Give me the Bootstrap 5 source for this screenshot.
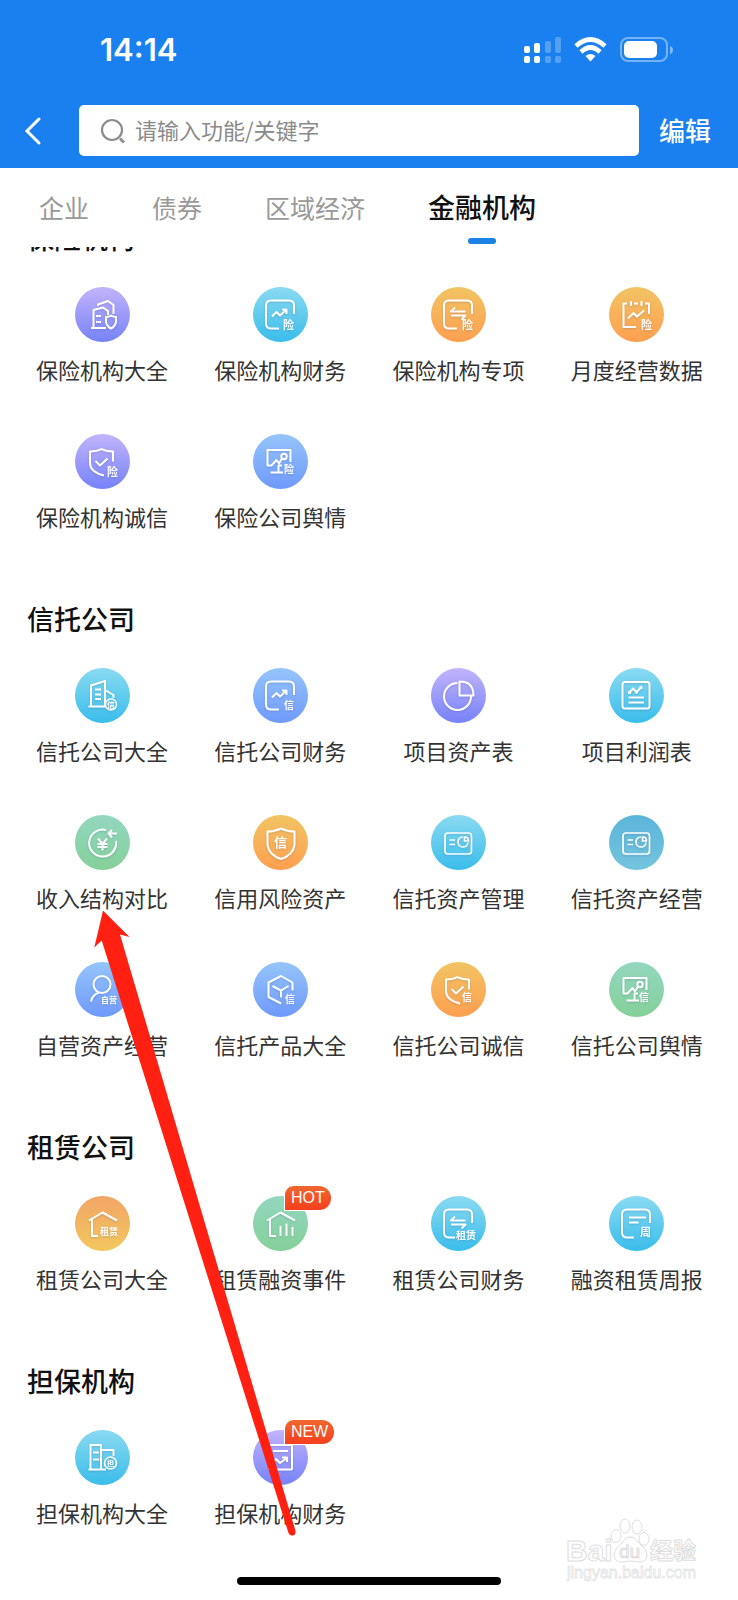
<!DOCTYPE html>
<html lang="zh-CN">
<head>
  <meta charset="UTF-8" />
  <meta name="viewport" content="width=device-width, initial-scale=1.0" />
  <title>金融机构</title>
  <link href="https://cdn.jsdelivr.net/npm/bootstrap@5.3.0/dist/css/bootstrap.min.css" rel="stylesheet" />
  <style>
    body {
      font-family: "Noto Sans CJK SC", sans-serif;
      color: #333;
      background: #fff;
    }
    .app-header {
      background: #1a80f0;
      color: #fff;
    }
    .status-bar {
      height: 98px;
      padding: 2px 65px 0 100px;
    }
    .clock {
      font: 600 31px/36px Inter, sans-serif;
    }
    .search-bar {
      padding: 7px 27px 12px 21px;
    }
    .back-btn {
      width: 58px;
    }
    .search-box {
      height: 51px;
      padding: 0 20px;
      border-radius: 5px;
      background: #fff;
    }
    .search-box input {
      margin-bottom: 4px;
      font-size: 22px;
      line-height: 30px;
      outline: 0;
    }
    .search-box input::placeholder {
      color: #8a8a8a;
      opacity: 1;
    }
    .edit-btn {
      margin: 0 0 2px 20px;
      font-size: 26px;
      line-height: 36px;
      font-weight: 500;
    }
    .tab-bar {
      height: 79px;
      padding: 21px 39px 0;
      column-gap: 63px;
    }
    .tab-bar a {
      color: #999;
      font-size: 25px;
      line-height: 36px;
      text-decoration: none;
    }
    .tab-bar a.active {
      color: #111;
      font-size: 27px;
      font-weight: 500;
    }
    .tab-bar a.active::after {
      content: "";
      display: block;
      width: 28px;
      height: 6px;
      margin: 13px auto 0;
      border-radius: 3px;
      background: #1c82e6;
    }
    .group + .group {
      margin-top: 70px;
    }
    /* the list is scrolled a little way under the tabs */
    .group:first-child {
      margin-top: -27px;
    }
    .group h2 {
      margin: 0 0 31px 27px;
      color: #111;
      font-size: 27px;
      line-height: 36px;
      font-weight: 500;
    }
    .group-grid {
      padding: 0 12px 0 13px;
      row-gap: 50px;
    }
    .tile {
      color: #333;
      font-size: 22px;
      line-height: 30px;
      text-decoration: none;
      white-space: nowrap;
    }
    .tile-icon {
      width: 55px;
      height: 55px;
      margin-bottom: 12px;
    }
    .tile-icon svg {
      display: block;
      fill: none;
      stroke: #fff;
      stroke-width: 2;
      stroke-linejoin: round;
      filter: drop-shadow(0 1px 1px rgba(40, 60, 120, .2));
    }
    .tile-icon text {
      fill: #fff;
      stroke: none;
      font-weight: 700;
    }
    .purple { background: linear-gradient(#c2b4fb, #7682f8); }
    .cyan { background: linear-gradient(#8adaf1, #3abdeb); }
    .orange { background: linear-gradient(#f1c463, #fe9f50); }
    .blue { background: linear-gradient(#95c5fb, #6f99fc); }
    .green { background: linear-gradient(#93d7c0, #84d098); }
    .teal { background: linear-gradient(#5cb5da, #74c4dd); }
    .amber { background: linear-gradient(#f2a567, #f2c75c); }
    .tile-badge {
      left: 31px;
      top: -10px;
      padding: 0 6px;
      border-left: 1px solid #fff;
      border-bottom: 1px solid #fff;
      border-radius: 9px 12px 12px 0;
      background: linear-gradient(#f0672f, #f53f1d);
      color: #fff;
      font: 500 16px/24px "Liberation Sans", sans-serif;
    }
    .home-bar {
      width: 264px;
      height: 8px;
      margin: 50px auto 14px;
      border-radius: 4px;
      background: #000;
    }
    .pointer-arrow {
      left: 90px;
      top: 908px;
      z-index: 2;
      pointer-events: none;
    }
    .watermark {
      right: 36px;
      bottom: 2px;
      fill: #fff;
      stroke: #ddd;
    }
  </style>
</head>
<body>
  <div class="position-relative">
    <header class="app-header">
      <div class="status-bar d-flex align-items-center justify-content-between">
        <span class="clock">14:14</span>
        <svg width="150" height="28" viewBox="0 0 150 28" fill="#fff">
          <rect x="1" y="10" width="6" height="7" rx="2" />
          <rect x="11" y="7" width="6" height="10" rx="2" />
          <rect x="1" y="20" width="6" height="7" rx="2" />
          <rect x="11" y="20" width="6" height="7" rx="2" />
          <g opacity=".25">
            <rect x="22" y="5" width="6" height="12" rx="2" />
            <rect x="32" y="1" width="6" height="16" rx="2" />
            <rect x="22" y="20" width="6" height="7" rx="2" />
            <rect x="32" y="20" width="6" height="7" rx="2" />
          </g>
          <g fill="none" stroke="#fff" stroke-width="4.6">
            <path d="M53 10Q67.500 -3 82 10" />
            <path d="M58 16Q67.500 7 77 16" />
          </g>
          <path d="M62.500 20Q67.500 16 72.500 20L67.500 25.500Z" />
          <rect x="98" y="2" width="46" height="23" rx="7" fill="none" stroke="#fff" stroke-opacity=".4" stroke-width="2" />
          <rect x="101" y="5" width="33" height="17" rx="5" />
          <path d="M147 10q3 1 3 4t-3 4z" opacity=".45" />
        </svg>
      </div>
      <div class="search-bar d-flex align-items-center">
        <button class="back-btn btn p-0 border-0 text-start" type="button" aria-label="返回">
          <svg width="22" height="30" viewBox="0 0 22 30" fill="none" stroke="#fff" stroke-width="3"><path d="M18 3L6 15L18 27" stroke-linecap="round" /></svg>
        </button>
        <label class="search-box flex-grow-1 d-flex align-items-center gap-2">
          <svg class="flex-shrink-0" width="28" height="28" viewBox="0 0 28 28" fill="none" stroke="#8c8c8c" stroke-width="2.200">
            <circle cx="13" cy="13" r="10" />
            <path d="M21 21.500L25 25.500" stroke-width="2.800" />
          </svg>
          <input class="border-0 p-0 w-100" type="text" placeholder="请输入功能/关键字" aria-label="搜索" />
        </label>
        <button class="edit-btn btn p-0 border-0 text-white" type="button">编辑</button>
      </div>
    </header>

    <nav class="tab-bar bg-white d-flex">
      <a href="#">企业</a>
      <a href="#">债券</a>
      <a href="#">区域经济</a>
      <a href="#" class="active">金融机构</a>
    </nav>

    <main id="groups" class="overflow-hidden"></main>
    <div class="home-bar"></div>

    <svg class="pointer-arrow position-absolute" width="210" height="632" viewBox="90 908 210 632">
      <path d="M103 910.500L129.500 937L120 934.500L295.500 1531Q296 1535 292.500 1535.500Q290 1536 288.500 1533L101.700 940.500L94.300 947.500Z" fill="#ff2012" />
    </svg>

    <svg class="watermark position-absolute" width="138" height="66" viewBox="0 0 138 66">
      <g font-family="Liberation Sans, sans-serif" font-weight="700">
        <text x="2" y="44" font-size="30">Bai</text>
        <ellipse cx="52" cy="19" rx="5" ry="6.500" />
        <ellipse cx="61" cy="9" rx="5" ry="7" />
        <ellipse cx="73" cy="10" rx="5" ry="7" />
        <ellipse cx="80" cy="22" rx="5" ry="6.500" />
        <path d="M66 20c-6 0-8 7-12 10c-6 5-5 15 3 15c4 0 6-1 9-1s6 1 10 1c8 0 9-10 3-15c-5-4-7-10-13-10z" />
        <text x="55" y="41" font-size="19" font-weight="400">du</text>
      </g>
      <text x="86" y="42" font-size="23" font-family="Noto Sans CJK SC, sans-serif" font-weight="700">经验</text>
      <text x="3" y="61" font-size="16" font-family="Liberation Sans, sans-serif" stroke="#e4e4e4" stroke-width=".8">jingyan.baidu.com</text>
    </svg>
  </div>

  <script src="https://cdn.jsdelivr.net/npm/bootstrap@5.3.0/dist/js/bootstrap.bundle.min.js"></script>
  <script>
  const char = (text, x, y, size) => `<text x="${x}" y="${y}" font-size="${size}">${text}</text>`;

  // shared outlines, drawn on a 55 x 55 canvas
  const frame = '<path d="M26 41.500H18Q13 41.500 13 36.500V18.500Q13 13.500 18 13.500H36Q41 13.500 41 18.500V27"/>';
  const trend = '<path d="M19 29.500L23.500 25L27 28.500L33 23M29 22.500H33.500V27"/>';
  const swap = '<path d="M34.500 24.500H20L24 20.500M20 28.500H34.500L30.500 32.500"/>';
  const shield = '<path d="M38 27.500V17.500Q31 17.500 26.500 15Q22 17.500 15 17.500V29Q15 38 29 41.500M20.500 27L25 31.500L32.500 24.500"/>';
  const board = '<path d="M37.500 28V16H14.500V31.500H18.500L23.500 26L26 29.500L29 24.500M25.500 38.500V31.500H29M17.500 38.500H30"/><circle cx="31" cy="22.500" r="2.700"/>';
  const house = '<path d="M14 24.500L27.500 16.500L42 24.500M17 23V40H23"/>';
  const meter = '<g stroke-width="1.700"><rect x="14" y="18" width="26.500" height="21" rx="3"/><path d="M18.500 25H24M18.500 29.500H24M32 22A5 5 0 1 0 37 27.500M33.500 22V26H37.500Q37.500 22 33.500 22Z"/></g>';

  const icons = {
    insureAll: '<path d="M16 41H31M18.500 41V23L28 20.500L33 24V28M23 19V17.500L33 14L38.500 18V27M21 29H26M21 35H26M36 28.500Q38.500 30 41 30V35Q40 39.500 36 41.500Q32 39.500 31 35V30Q34 30 36 28.500Z"/>',
    insureFin: frame + trend + char('险', 30, 42, 11),
    insureSwap: frame + swap + char('险', 31, 42, 11),
    calendar: '<path d="M27 40H14.500V16.500H18M25 16.500H29M36 16.500H40V27M22 14V19M32.500 14V19M19 31.500L24.500 26L28 29.500L35 23.500"/>' + char('险', 32, 42, 11),
    insureShield: shield + char('险', 32, 42, 11),
    insureBoard: board + char('险', 31, 39, 10),
    trustAll: '<path d="M13.500 38.500H31M16 38.500V17.500L30 13V38.500M20 21.500H26M20 26.500H26M20 31H26M30 22L38.500 27V30"/><circle cx="36" cy="36.500" r="5.500" stroke-width="1.400"/>' + char('信', 32, 40, 8),
    trustFin: frame + trend + char('信', 31, 41, 10),
    pie: '<path d="M26.500 15A13.500 13.500 0 1 0 40 28.500M28.500 13.500V27.500H42.500Q42.500 13.500 28.500 13.500Z"/>',
    report: '<rect x="13.500" y="14" width="27" height="26.500" rx="2.500"/><path d="M20.500 24.500L24 20.500L27.500 24L32 19.500M19.500 29.500H35M19.500 34.500H35"/><circle cx="20.500" cy="24.500" r=".7"/><circle cx="27.500" cy="24" r=".7"/><circle cx="32" cy="19.500" r=".7"/>',
    income: '<path d="M31 15A13.500 13.500 0 1 0 41 26M42 18.500H33.500M37 15L33.500 18.500L37 22.500M23 23.500L27.500 29L32 23.500M27.500 29V35.500M22.500 29H32.500M22.500 32H32.500"/>',
    risk: '<path d="M28 13.500Q34 16.500 41.500 16.500V30Q40 40 28 44Q16 40 14.500 30V16.500Q22 16.500 28 13.500Z"/>' + char('信', 21, 32, 13),
    meter,
    person: '<circle cx="27" cy="22.500" r="8.500"/><path d="M24 30.500Q17 33 16 39.500"/>' + char('自营', 26, 41, 8),
    box: '<path d="M39.500 28.500V20.500L28 14L15.500 20.500V35L28 41.500M19.500 24L28 28.500L35.500 24M28 28.500V35.500"/>' + char('信', 32, 41, 10),
    trustShield: shield + char('信', 31, 39, 10),
    trustBoard: board + char('信', 30, 39, 10),
    leaseAll: house + char('租赁', 25, 39, 9),
    leaseEvent: house + '<path d="M27.500 30V40M33.500 27.500V40M39.500 31V40"/>',
    leaseFin: '<path d="M24 41.500H18Q13 41.500 13 36.500V18.500Q13 13.500 18 13.500H36Q41 13.500 41 18.500V27"/>' + swap + char('租赁', 25, 43, 10),
    weekly: '<path d="M25 41.500H18Q13 41.500 13 36.500V18.500Q13 13.500 18 13.500H36Q41 13.500 41 18.500V27M20 21.500H37M20 26.500H29.500"/>' + char('周', 31, 40, 11),
    guardAll: '<path d="M13.500 39.500H31M15.500 39.500V15H26V39.500M18 22.500H24M18 29.500H24M26 20H38.500V26"/><circle cx="35.500" cy="33" r="6" stroke-width="1.600"/>' + char('担', 32, 36, 7),
    guardFin: '<rect x="16" y="15" width="23" height="24.500" rx="1"/><path d="M20 21H35M19 33L23 29L27 33L33 28.500M29 27.500H34V32"/>'
  };

  const groups = [
    { title: '保险机构', items: [
      ['保险机构大全', 'insureAll', 'purple'], ['保险机构财务', 'insureFin', 'cyan'],
      ['保险机构专项', 'insureSwap', 'orange'], ['月度经营数据', 'calendar', 'orange'],
      ['保险机构诚信', 'insureShield', 'purple'], ['保险公司舆情', 'insureBoard', 'blue']
    ] },
    { title: '信托公司', items: [
      ['信托公司大全', 'trustAll', 'cyan'], ['信托公司财务', 'trustFin', 'blue'],
      ['项目资产表', 'pie', 'purple'], ['项目利润表', 'report', 'cyan'],
      ['收入结构对比', 'income', 'green'], ['信用风险资产', 'risk', 'orange'],
      ['信托资产管理', 'meter', 'cyan'], ['信托资产经营', 'meter', 'teal'],
      ['自营资产经营', 'person', 'blue'], ['信托产品大全', 'box', 'blue'],
      ['信托公司诚信', 'trustShield', 'orange'], ['信托公司舆情', 'trustBoard', 'green']
    ] },
    { title: '租赁公司', items: [
      ['租赁公司大全', 'leaseAll', 'amber'], ['租赁融资事件', 'leaseEvent', 'green', 'HOT'],
      ['租赁公司财务', 'leaseFin', 'cyan'], ['融资租赁周报', 'weekly', 'cyan']
    ] },
    { title: '担保机构', items: [
      ['担保机构大全', 'guardAll', 'cyan'], ['担保机构财务', 'guardFin', 'purple', 'NEW']
    ] }
  ];

  document.getElementById('groups').innerHTML = groups.map(group => `
    <section class="group">
      <h2>${group.title}</h2>
      <div class="group-grid row gx-0 m-0">
        ${group.items.map(([label, icon, color, badge]) => `
          <a href="#" class="tile col-3 d-flex flex-column align-items-center">
            <span class="tile-icon ${color} position-relative rounded-circle">
              <svg width="55" height="55" viewBox="0 0 55 55">${icons[icon]}</svg>
              ${badge ? `<span class="tile-badge position-absolute">${badge}</span>` : ''}
            </span>
            <span>${label}</span>
          </a>
        `).join('')}
      </div>
    </section>
  `).join('');
  </script>
</body>
</html>
